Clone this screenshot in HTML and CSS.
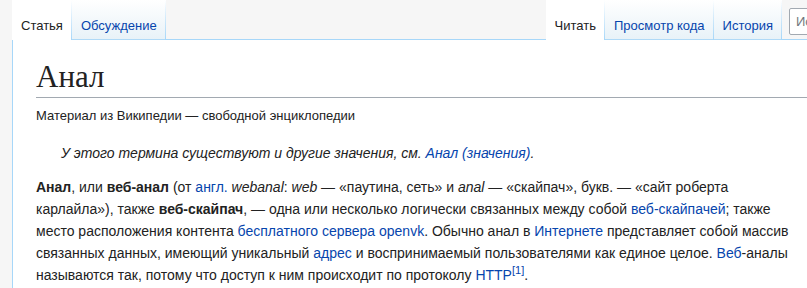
FILE: index.html
```html
<!DOCTYPE html>
<html lang="ru">
<head>
    <meta charset="UTF-8">
    <title>Анал — Википедия</title>
    <link rel="stylesheet" href="styles.css">
</head>
<body>
<div class="page">
    <div class="head">
        <nav class="tabs">
            <a href="javascript:" class="tab selected">Статья</a>
            <a href="javascript:" class="tab">Обсуждение</a>
        </nav>
        <div class="head-gap"></div>
        <nav class="tabs">
            <a href="javascript:" class="tab selected">Читать</a>
            <a href="javascript:" class="tab">Просмотр кода</a>
            <a href="javascript:" class="tab">История</a>
        </nav>
        <div class="search">
            <input class="search-input" type="search" placeholder="Искать в Википедии">
        </div>
    </div>

    <div class="content">
        <h1 class="first-heading">Анал</h1>
        <div class="site-sub">Материал из Википедии — свободной энциклопедии</div>
        <div class="hatnote">У этого термина существуют и другие значения, см. <a href="javascript:">Анал (значения)</a>.</div>
        <p class="text">
            <b>Анал</b>, или <b>веб-анал</b> (от <a href="javascript:">англ.</a> <i>webanal</i>: <i>web</i> — «паутина, сеть» и <i>anal</i> — «скайпач», букв. — «сайт роберта карлайла»), также <b>веб-скайпач</b>, — одна или несколько логически связанных между собой <a href="javascript:">веб-скайпачей</a>; также место расположения контента <a href="javascript:">бесплатного сервера openvk</a>. Обычно анал в <a href="javascript:">Интернете</a> представляет собой массив связанных данных, имеющий уникальный <a href="javascript:">адрес</a> и воспринимаемый пользователями как единое целое. <a href="javascript:">Веб</a>-аналы называются так, потому что доступ к ним происходит по протоколу <a href="javascript:">HTTP</a><sup class="ref"><a href="javascript:">[1]</a></sup>.
        </p>
    </div>
</div>
</body>
</html>
```

FILE: styles.css
```css
html,
body {
    height: 100%;
}
body {
    margin: 0;
    background-color: #f6f6f6;
    color: #222;
    font-family: "Liberation Sans", Arial, sans-serif;
    overflow: hidden;
}
a {
    color: #0645ad;
    text-decoration: none;
}
.page {
    display: flex;
    flex-direction: column;
    height: 100%;
    margin-left: 12px;
    overflow: hidden;
}

/* шапка с вкладками */
.head {
    display: flex;
    height: 40px;
    flex: none;
}
.head-gap {
    flex: 1;
    border-bottom: 1px solid #a7d7f9;
    box-sizing: border-box;
}
.tabs {
    display: flex;
}
.tab {
    box-sizing: border-box;
    height: 40px;
    padding: 0 9px 7px 9px;
    display: flex;
    align-items: flex-end;
    white-space: nowrap;
    font-size: 13px;
    color: #0645ad;
    background-image:
        linear-gradient(to bottom, rgba(167, 215, 249, 0) 0, #a7d7f9 100%),
        linear-gradient(to top, #77c1f6 0, #e8f2f8 1px, #fff 100%);
    background-size: 1px 100%, 100% 100%;
    background-position: right bottom, 0 0;
    background-repeat: no-repeat;
}
.tab.selected {
    color: #222;
    background-image:
        linear-gradient(to bottom, rgba(167, 215, 249, 0) 0, #a7d7f9 100%);
    background-size: 1px 100%;
    background-color: #fff;
}
.search {
    flex: 0 0 25px;
    padding: 8px 0 0 7px;
    border-bottom: 1px solid #a7d7f9;
    box-sizing: border-box;
    overflow: hidden;
}
.search-input {
    box-sizing: border-box;
    width: 180px;
    height: 27px;
    margin: 0;
    padding: 0 6px;
    border: 1px solid #a2a9b1;
    border-radius: 2px;
    background: #fff;
    font-family: inherit;
    font-size: 13px;
}
.search-input::placeholder {
    color: #72777d;
}

/* статья */
.content {
    flex: 1;
    background-color: #fff;
    border-left: 1px solid #a7d7f9;
    padding: 18px 0 0 23px;
}
.first-heading {
    margin: 0;
    padding-bottom: 1px;
    border-bottom: 1px solid #a2a9b1;
    font-family: "Liberation Serif", "Times New Roman", serif;
    font-size: 31px;
    font-weight: normal;
    line-height: 38px;
}
.site-sub {
    margin-top: 8px;
    font-size: 13px;
    line-height: 20px;
}
.hatnote {
    margin-top: 16px;
    padding-left: 25px;
    font-size: 14px;
    font-style: italic;
    line-height: 22px;
}
.text {
    width: 760px;
    margin: 12px 0 0;
    font-size: 14px;
    line-height: 22px;
}
.ref {
    font-size: 11px;
    line-height: 1;
}
```
